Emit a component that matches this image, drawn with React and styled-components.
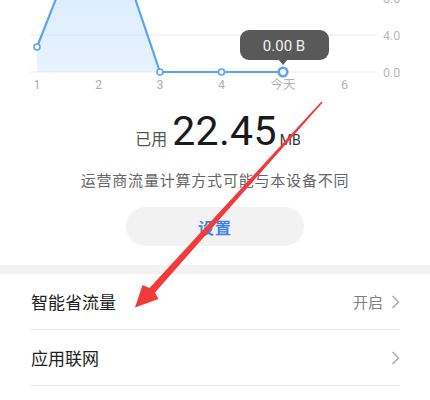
import React from "react";
import styled, { createGlobalStyle } from "styled-components";

const GlobalStyle = createGlobalStyle`
  body {
    margin: 0;
    background: #fff;
    font-family: Roboto, "Noto Sans CJK SC", sans-serif;
  }
`;

// usage for the last days, in MB
const days = [
  { label: "1", value: 2.7 },
  { label: "2", value: 19.6 },
  { label: "3", value: 0 },
  { label: "4", value: 0 },
  { label: "今天", value: 0 },
  { label: "6", value: null },
];

const X0 = 37;
const STEP = 61.5;
const BASE = 72;
const PER_UNIT = 9.25;

const px = (i) => X0 + i * STEP;
const py = (v) => BASE - v * PER_UNIT;

function UsageChart() {
  const pts = days.filter((d) => d.value !== null).map((d, i) => [px(i), py(d.value)]);
  const line = pts.map((p) => p.join(",")).join(" ");
  const area = `${pts[0][0]},${BASE} ${line} ${pts[pts.length - 1][0]},${BASE}`;
  const today = pts[pts.length - 1];

  return (
    <ChartSvg width="430" height="95" viewBox="0 0 430 95">
      <defs>
        <linearGradient id="fill" x1="0" y1="0" x2="0" y2="1">
          <stop offset="0" stopColor="#9ccbfa" stopOpacity="0.45" />
          <stop offset="1" stopColor="#cfe6fd" stopOpacity="0.5" />
        </linearGradient>
      </defs>
      {[8, 4, 0].map((v) => (
        <g key={v}>
          <line x1="30" x2="376" y1={py(v)} y2={py(v)} stroke="#ececec" strokeWidth="1" />
          <text x="383" y={py(v) + 4.5} fontSize="12.5" fill="#b8b8b8">
            {v.toFixed(1)}
          </text>
        </g>
      ))}
      <polygon points={area} fill="url(#fill)" />
      <polyline points={line} fill="none" stroke="#5aa4f4" strokeWidth="2.2" strokeLinejoin="round" />
      {pts.slice(0, -1).map(([x, y]) => (
        <circle key={x} cx={x} cy={y} r="3" fill="#fff" stroke="#5aa4f4" strokeWidth="1.6" />
      ))}
      <circle cx={today[0]} cy={today[1]} r="4.3" fill="#fff" stroke="#5aa4f4" strokeWidth="2.6" />
      {days.map((d, i) => (
        <text key={d.label} x={px(i)} y="89" fontSize="12.5" fill="#b0b0b0" textAnchor="middle">
          {d.label}
        </text>
      ))}
      <rect x="240" y="30" width="89" height="30" rx="9" fill="#595959" />
      <polygon points={`${today[0] - 5},59 ${today[0] + 5},59 ${today[0]},65`} fill="#595959" />
      <text x={today[0] + 1} y="50.5" fontSize="15" fill="#f2f2f2" textAnchor="middle">
        0.00 B
      </text>
    </ChartSvg>
  );
}

function AnnotationArrow() {
  return (
    <ArrowSvg width="430" height="400" viewBox="0 0 430 400">
      <polygon
        points="321.4,101.6 322.6,102.4 155,292.5 158.5,299 135,307.5 142.5,285 149.5,288"
        fill="#f23a3a"
      />
    </ArrowSvg>
  );
}

function Chevron() {
  return (
    <svg width="9" height="14" viewBox="0 0 9 14">
      <path d="M1.5 1 L7.5 7 L1.5 13" fill="none" stroke="#a6a6a6" strokeWidth="1.3" />
    </svg>
  );
}

export default function App() {
  return (
    <Page>
      <GlobalStyle />
      <UsageChart />
      <Summary>
        <Usage>
          <UsedLabel>已用</UsedLabel>
          <UsedValue>22.45</UsedValue>
          <UsedUnit>MB</UsedUnit>
        </Usage>
        <Note>运营商流量计算方式可能与本设备不同</Note>
        <SetButton>设置</SetButton>
      </Summary>
      <Band />
      <List>
        <Row>
          <RowTitle>智能省流量</RowTitle>
          <RowEnd>
            <RowValue>开启</RowValue>
            <Chevron />
          </RowEnd>
        </Row>
        <Row>
          <RowTitle>应用联网</RowTitle>
          <RowEnd>
            <Chevron />
          </RowEnd>
        </Row>
      </List>
      <AnnotationArrow />
    </Page>
  );
}

const Page = styled.div`
  position: relative;
  width: 430px;
  height: 400px;
  overflow: hidden;
  background: #fff;
`;

const ChartSvg = styled.svg`
  display: block;
  font-family: Roboto, "Noto Sans CJK SC", sans-serif;
`;

const ArrowSvg = styled.svg`
  position: absolute;
  left: 0;
  top: 0;
  pointer-events: none;
`;

const Summary = styled.section`
  display: flex;
  flex-direction: column;
  align-items: center;
  padding-top: 12px;
`;

const Usage = styled.div`
  display: flex;
  align-items: baseline;
  height: 48px;
  padding-left: 6px;
`;

const UsedLabel = styled.span`
  font-size: 16px;
  color: #555;
  margin-right: 5px;
`;

const UsedValue = styled.span`
  font-size: 41px;
  color: #1a1a1a;
  letter-spacing: 0.3px;
`;

const UsedUnit = styled.span`
  font-size: 14px;
  color: #333;
  margin-left: 3px;
`;

const Note = styled.p`
  margin: 14px 0 0;
  font-size: 15px;
  letter-spacing: 0.8px;
  color: #666;
`;

const SetButton = styled.button`
  margin-top: 17px;
  width: 178px;
  height: 39px;
  border: none;
  border-radius: 20px;
  background: #f2f2f2;
  color: #3d82e8;
  font-family: inherit;
  font-size: 16px;
  font-weight: 600;
  letter-spacing: 1px;
`;

const Band = styled.div`
  margin-top: 19px;
  height: 9px;
  background: #f2f2f2;
`;

const List = styled.ul`
  list-style: none;
  margin: 0;
  padding: 0 30px 0 31px;
`;

const Row = styled.li`
  display: flex;
  align-items: center;
  justify-content: space-between;
  height: 55px;
  border-bottom: 1px solid #e6e6e6;
`;

const RowTitle = styled.span`
  font-size: 17px;
  color: #222;
`;

const RowEnd = styled.span`
  display: flex;
  align-items: center;
  gap: 8px;
`;

const RowValue = styled.span`
  font-size: 15px;
  color: #808080;
`;
